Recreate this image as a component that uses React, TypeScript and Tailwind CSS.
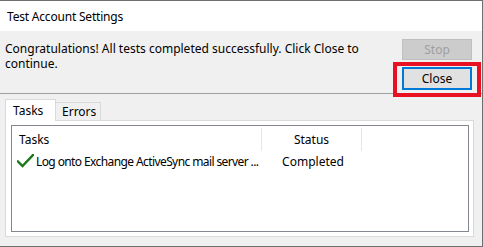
import React from "react";

const font = { fontFamily: '"Noto Sans", "Open Sans", sans-serif' };

function Check() {
  return (
    <svg width="17" height="14" viewBox="0 0 17 14" className="shrink-0">
      <path d="M1 7.5 L5.5 12 L16 1" fill="none" stroke="#1a7a1a" strokeWidth="2.4" strokeLinecap="square" />
    </svg>
  );
}

export default function App() {
  return (
    <div
      className="relative w-[483px] h-[247px] bg-[#f0f0f0] border-t border-r border-b border-[#6f6f6f] flex flex-col overflow-hidden text-[12px] text-black leading-[15px]"
      style={font}
    >
      <div className="h-[30px] bg-white flex items-center pl-[7px] shrink-0 tracking-[-0.2px]">Test Account Settings</div>

      <div className="h-[62px] flex shrink-0">
        <div className="pl-[5px] pt-[10px]">
          Congratulations! All tests completed successfully. Click Close to
          <br />
          continue.
        </div>
        <div className="ml-auto mr-[10px] pt-[8px] flex flex-col gap-[7px]">
          <div className="w-[70px] h-[21px] bg-[#cccccc] border border-[#bfbfbf] text-[#a0a0a0] flex items-center justify-center">
            Stop
          </div>
          <div className="w-[70px] h-[23px] bg-[#e1e1e1] border-2 border-[#0078d7] flex items-center justify-center">
            Close
          </div>
        </div>
      </div>

      <div className="h-px bg-[#a0a0a0] shrink-0" />

      <div className="pl-[5px] mt-[5px] flex items-end relative z-10 shrink-0">
        <div className="w-[51px] bg-white border border-b-0 border-[#d9d9d9] pl-[7px] flex items-center mb-[-1px] h-[22px]">
          Tasks
        </div>
        <div className="w-[45px] h-[18px] bg-[#f0f0f0] border border-l-0 border-b-0 border-[#d9d9d9] pl-[6px] flex items-center">
          Errors
        </div>
      </div>

      <div className="ml-[5px] w-[469px] h-[117px] bg-white border border-[#d9d9d9] pl-[5px] pt-[4px] shrink-0">
        <div className="w-[458px] h-[107px] border border-[#828790] bg-white">
          <div className="flex h-[25px] items-stretch pt-[2px]">
            <div className="w-[250px] border-r border-[#e5e5e5] pl-[7px] flex items-center">Tasks</div>
            <div className="w-[100px] border-r border-[#e5e5e5] flex items-center justify-center">Status</div>
          </div>
          <div className="flex h-[20px] items-center">
            <div className="w-[251px] pl-[5px] flex items-center gap-[2px] whitespace-nowrap overflow-hidden">
              <Check />
              <span className="tracking-[-0.6px]">Log onto Exchange ActiveSync mail server ...</span>
            </div>
            <div className="w-[100px] text-center">Completed</div>
          </div>
        </div>
      </div>

      <div className="absolute left-[393px] top-[61px] w-[88px] h-[35px] border-4 border-[#e81123]" />
    </div>
  );
}
